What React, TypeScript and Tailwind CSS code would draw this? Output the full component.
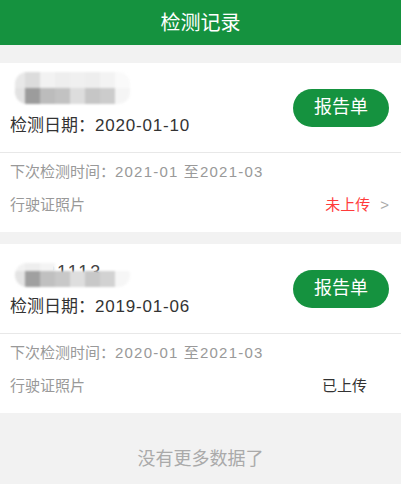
import React from "react";

type Record = {
  plate: string;
  date: string;
  next: string;
  uploaded: boolean;
  mosaicTop: number;
  rowHeights: number[];
  mosaic: string[][];
};

const records: Record[] = [
  {
    plate: "",
    date: "2020-01-10",
    next: "2021-01 至2021-03",
    uploaded: false,
    mosaicTop: 0,
    rowHeights: [16, 16],
    mosaic: [
      ["#e8e8e8", "#dcdcdc", "#f2f2f2", "#eeeeee", "#f0f0f0", "#eeeeee", "#f3f3f3", "#fafafa"],
      ["#e2e2e2", "#9c9c9c", "#bcbcbc", "#c2c2c2", "#dddddd", "#c6c6c6", "#cccccc", "#f5f5f5"],
    ],
  },
  {
    plate: "31113",
    date: "2019-01-06",
    next: "2020-01 至2021-03",
    uploaded: true,
    mosaicTop: 10,
    rowHeights: [8, 16],
    mosaic: [
      ["#f2f2f2", "#eeeeee", "#f4f4f4", "transparent", "transparent", "transparent", "transparent", "transparent"],
      ["#e4e4e4", "#a0a0a0", "#c0c0c0", "#c8c8c8", "#dedede", "#c8c8c8", "#d2d2d2", "#f6f6f6"],
    ],
  },
];

const font = { fontFamily: '"Liberation Sans", "Noto Sans CJK SC", sans-serif' };

function Mosaic({ r }: { r: Record }) {
  return (
    <div
      className="absolute left-[5px] flex flex-col overflow-hidden rounded-[12px] blur-[0.8px]"
      style={{ top: r.mosaicTop }}
    >
      {r.mosaic.map((row, i) => (
        <div key={i} className="flex">
          {row.map((c, j) => (
            <div
              key={j}
              className={j === 0 ? "w-[10px]" : "w-[15px]"}
              style={{ backgroundColor: c, height: r.rowHeights[i] }}
            />
          ))}
        </div>
      ))}
    </div>
  );
}

function RecordCard({ r }: { r: Record }) {
  return (
    <div className="bg-white">
      <div className="flex h-[89px] justify-between pl-[10px] pr-[12px]">
        <div className="flex flex-col pt-[9px]">
          <div className="relative h-[33px]">
            <div className="pl-[35px] pt-[8px] text-[18px] leading-[22px] tracking-[2px] text-[#444]">{r.plate}</div>
            <Mosaic r={r} />
          </div>
          <div className="mt-[10px] text-[17px] leading-[22px] text-[#333]">
            检测日期：<span className="tracking-[0.8px]">{r.date}</span>
          </div>
        </div>
        <button className="h-[38px] w-[96px] self-center rounded-full bg-[#15923f] text-[18px] text-white">
          报告单
        </button>
      </div>
      <div className="h-px bg-[#e8e8e8]" />
      <div className="pb-[17px] pl-[10px] pr-[12px] pt-[9px] text-[15px] leading-[20px] text-[#999]">
        <div>
          下次检测时间：<span className="tracking-[1.2px]">{r.next}</span>
        </div>
        <div className="mt-[13px] flex items-center justify-between">
          <span>行驶证照片</span>
          {r.uploaded ? (
            <span className="pr-[22px] text-[#333]">已上传</span>
          ) : (
            <span className="flex items-center">
              <span className="text-[#ff3b3b]">未上传</span>
              <span className="ml-[10px] text-[#aaa]">&gt;</span>
            </span>
          )}
        </div>
      </div>
    </div>
  );
}

export default function App() {
  return (
    <div className="flex h-[484px] w-[401px] flex-col overflow-hidden bg-[#f2f2f2]" style={font}>
      <header className="flex h-[45px] items-center justify-center bg-[#15923f] text-[20px] text-white">
        检测记录
      </header>
      <div className="mt-[18px] flex flex-col gap-[12px]">
        {records.map((r) => (
          <RecordCard key={r.date} r={r} />
        ))}
      </div>
      <div className="mt-[34px] text-center text-[18px] leading-[24px] text-[#aaa]">没有更多数据了</div>
    </div>
  );
}
